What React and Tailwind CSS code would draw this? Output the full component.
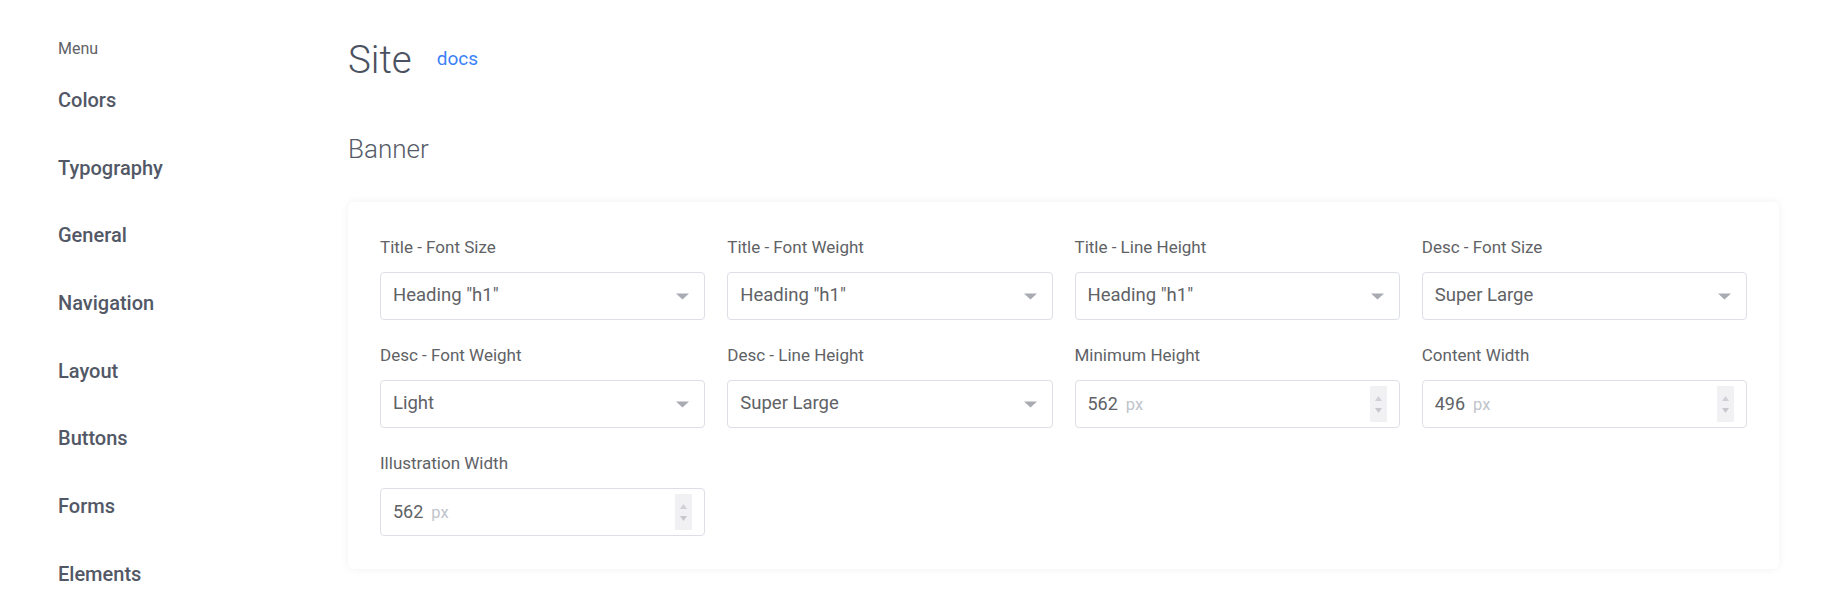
import React from "react";

const menu = ["Colors", "Typography", "General", "Navigation", "Layout", "Buttons", "Forms", "Elements"];

const fields = [
  { label: "Title - Font Size", type: "select", value: 'Heading "h1"' },
  { label: "Title - Font Weight", type: "select", value: 'Heading "h1"' },
  { label: "Title - Line Height", type: "select", value: 'Heading "h1"' },
  { label: "Desc - Font Size", type: "select", value: "Super Large" },
  { label: "Desc - Font Weight", type: "select", value: "Light" },
  { label: "Desc - Line Height", type: "select", value: "Super Large" },
  { label: "Minimum Height", type: "number", value: "562" },
  { label: "Content Width", type: "number", value: "496" },
  { label: "Illustration Width", type: "number", value: "562" },
];

function SelectBox({ value }) {
  return (
    <div className="flex h-[48px] items-center justify-between rounded-[4px] border border-[#dcdfe6] bg-white pl-[12px] pr-[13px]">
      <span className="text-[18.5px] text-[#606266]">{value}</span>
      <svg width="13" height="7" viewBox="0 0 13 7" className="mr-[2px]">
        <path d="M0 0.5 L13 0.5 L6.5 6.5 Z" fill="#a8abb2" />
      </svg>
    </div>
  );
}

function NumberBox({ value }) {
  return (
    <div className="flex h-[48px] items-center justify-between rounded-[4px] border border-[#dcdfe6] bg-white pl-[12px] pr-[12px]">
      <div className="flex items-baseline gap-[8px]">
        <span className="text-[18px] text-[#606266]">{value}</span>
        <span className="text-[16.5px] text-[#c0c4cc]">px</span>
      </div>
      <div className="flex h-[36px] w-[17px] flex-col items-center justify-center gap-[7px] bg-[#f1f1f3]">
        <svg width="7" height="5" viewBox="0 0 7 5">
          <path d="M0 5 L3.5 0 L7 5 Z" fill="#cfd1d6" />
        </svg>
        <svg width="7" height="5" viewBox="0 0 7 5">
          <path d="M0 0 L7 0 L3.5 5 Z" fill="#c6c8cd" />
        </svg>
      </div>
    </div>
  );
}

export default function App() {
  return (
    <div className="flex h-[608px] w-full overflow-hidden bg-white font-['Roboto',sans-serif]">
      <aside className="w-[290px] shrink-0 pl-[58px] pt-[37px]">
        <p className="text-[16px] leading-[24px] text-[#606266]">Menu</p>
        <nav className="mt-[5px]">
          {menu.map((m) => (
            <div key={m} className="flex h-[67.7px] items-center text-[20px] font-medium text-[#525866]">
              {m}
            </div>
          ))}
        </nav>
      </aside>

      <main className="min-w-0 flex-1 pl-[58px] pr-[60px] pt-[36px]">
        <div className="flex h-[48px] items-center gap-[25px]">
          <h1 className="text-[38.5px] font-light leading-[48px] text-[#4b5261]">Site</h1>
          <a className="mt-[-2px] text-[19px] text-[#3b82f6]">docs</a>
        </div>

        <h2 className="mt-[49px] text-[26px] font-light leading-[32px] text-[#555b68]">Banner</h2>

        <section className="mt-[37px] w-[1431px] rounded-[6px] bg-white px-[32px] pb-[33px] pt-[32px] shadow-[0_0_10px_rgba(0,0,0,0.06)]">
          <div className="grid grid-cols-4 gap-x-[22px] gap-y-[22px]">
            {fields.map((f) => (
              <div key={f.label}>
                <p className="mb-[12px] text-[17px] leading-[26px] text-[#606266]">{f.label}</p>
                {f.type === "select" ? <SelectBox value={f.value} /> : <NumberBox value={f.value} />}
              </div>
            ))}
          </div>
        </section>
      </main>
    </div>
  );
}
